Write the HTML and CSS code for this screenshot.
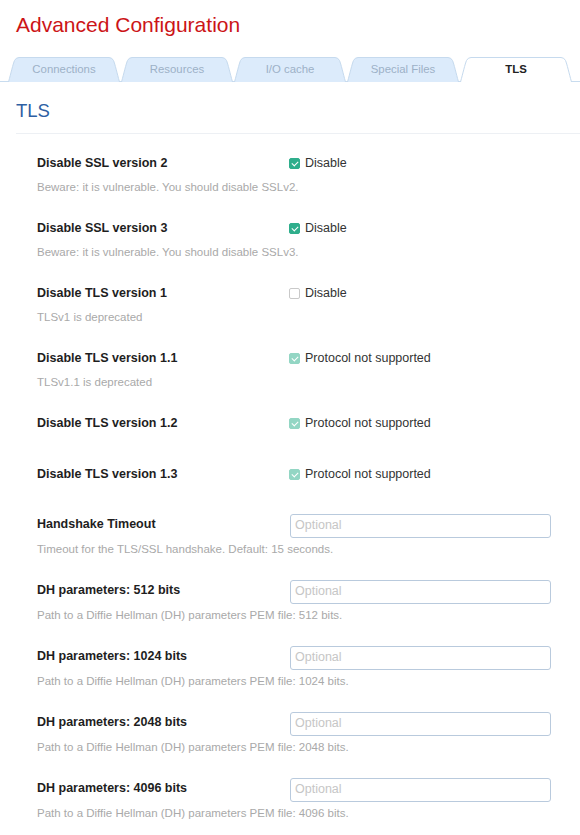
FILE: index.html
```html
<!DOCTYPE html>
<html>
<head>
<meta charset="utf-8">
<link rel="stylesheet" href="styles.css">
</head>
<body>
<h1 class="page-title">Advanced Configuration</h1>
<div class="tabbar">
  <div class="tab"><svg class="tab-shape" viewBox="0 0 112 25" width="112" height="25"><path d="M0.5,25 C3,16 5,7 6.5,3.5 Q8,0.5 11,0.5 L101,0.5 Q104,0.5 105.5,3.5 C107,7 109,16 111.5,25"/></svg><span class="tab-label">Connections</span></div>
  <div class="tab"><svg class="tab-shape" viewBox="0 0 112 25" width="112" height="25"><path d="M0.5,25 C3,16 5,7 6.5,3.5 Q8,0.5 11,0.5 L101,0.5 Q104,0.5 105.5,3.5 C107,7 109,16 111.5,25"/></svg><span class="tab-label">Resources</span></div>
  <div class="tab"><svg class="tab-shape" viewBox="0 0 112 25" width="112" height="25"><path d="M0.5,25 C3,16 5,7 6.5,3.5 Q8,0.5 11,0.5 L101,0.5 Q104,0.5 105.5,3.5 C107,7 109,16 111.5,25"/></svg><span class="tab-label">I/O cache</span></div>
  <div class="tab"><svg class="tab-shape" viewBox="0 0 112 25" width="112" height="25"><path d="M0.5,25 C3,16 5,7 6.5,3.5 Q8,0.5 11,0.5 L101,0.5 Q104,0.5 105.5,3.5 C107,7 109,16 111.5,25"/></svg><span class="tab-label">Special Files</span></div>
  <div class="tab active"><svg class="tab-shape" viewBox="0 0 112 25" width="112" height="25"><path d="M0.5,25 C3,16 5,7 6.5,3.5 Q8,0.5 11,0.5 L101,0.5 Q104,0.5 105.5,3.5 C107,7 109,16 111.5,25"/></svg><span class="tab-label">TLS</span></div>
</div>

<h2 class="section-title">TLS</h2>

<div class="rows">
  <div class="row">
    <div class="label">Disable SSL version 2</div>
    <div class="control"><span class="cb checked"></span><span class="cb-text">Disable</span></div>
    <div class="desc">Beware: it is vulnerable. You should disable SSLv2.</div>
  </div>
  <div class="row">
    <div class="label">Disable SSL version 3</div>
    <div class="control"><span class="cb checked"></span><span class="cb-text">Disable</span></div>
    <div class="desc">Beware: it is vulnerable. You should disable SSLv3.</div>
  </div>
  <div class="row">
    <div class="label">Disable TLS version 1</div>
    <div class="control"><span class="cb"></span><span class="cb-text">Disable</span></div>
    <div class="desc">TLSv1 is deprecated</div>
  </div>
  <div class="row">
    <div class="label">Disable TLS version 1.1</div>
    <div class="control"><span class="cb checked disabled"></span><span class="cb-text">Protocol not supported</span></div>
    <div class="desc">TLSv1.1 is deprecated</div>
  </div>
  <div class="row">
    <div class="label">Disable TLS version 1.2</div>
    <div class="control"><span class="cb checked disabled"></span><span class="cb-text">Protocol not supported</span></div>
  </div>
  <div class="row">
    <div class="label">Disable TLS version 1.3</div>
    <div class="control"><span class="cb checked disabled"></span><span class="cb-text">Protocol not supported</span></div>
  </div>
  <div class="row input-row">
    <div class="label">Handshake Timeout</div>
    <div class="control"><input class="text-input" type="text" placeholder="Optional"></div>
    <div class="desc">Timeout for the TLS/SSL handshake. Default: 15 seconds.</div>
  </div>
  <div class="row input-row">
    <div class="label">DH parameters: 512 bits</div>
    <div class="control"><input class="text-input" type="text" placeholder="Optional"></div>
    <div class="desc">Path to a Diffie Hellman (DH) parameters PEM file: 512 bits.</div>
  </div>
  <div class="row input-row">
    <div class="label">DH parameters: 1024 bits</div>
    <div class="control"><input class="text-input" type="text" placeholder="Optional"></div>
    <div class="desc">Path to a Diffie Hellman (DH) parameters PEM file: 1024 bits.</div>
  </div>
  <div class="row input-row">
    <div class="label">DH parameters: 2048 bits</div>
    <div class="control"><input class="text-input" type="text" placeholder="Optional"></div>
    <div class="desc">Path to a Diffie Hellman (DH) parameters PEM file: 2048 bits.</div>
  </div>
  <div class="row input-row">
    <div class="label">DH parameters: 4096 bits</div>
    <div class="control"><input class="text-input" type="text" placeholder="Optional"></div>
    <div class="desc">Path to a Diffie Hellman (DH) parameters PEM file: 4096 bits.</div>
  </div>
</div>
</body>
</html>
```

FILE: styles.css
```css
* { box-sizing: border-box; }

html, body {
  margin: 0;
  padding: 0;
  background: #ffffff;
  font-family: "Liberation Sans", Arial, sans-serif;
  color: #222;
}

.page-title {
  margin: 0;
  padding: 12px 0 0 16px;
  height: 57px;
  font-size: 21px;
  line-height: 26px;
  font-weight: normal;
  color: #cc1417;
}

.tabbar {
  display: flex;
  align-items: flex-end;
  gap: 1px;
  padding-left: 8px;
  height: 25px;
  border-bottom: 1px solid #c8dcef;
}

.tab {
  position: relative;
  flex: none;
  width: 112px;
  height: 24px;
  display: flex;
  align-items: center;
  justify-content: center;
}

.tab.active {
  height: 25px;
  margin-bottom: -1px;
  padding-bottom: 1px;
}

.tab-shape {
  position: absolute;
  left: 0;
  top: 0;
  overflow: visible;
}

.tab-shape path {
  fill: #dcebfb;
  stroke: #c6daee;
  stroke-width: 1;
}

.tab.active .tab-shape path {
  fill: #ffffff;
}

.tab-label {
  position: relative;
  font-size: 11.4px;
  color: #9db1c7;
}

.tab.active .tab-label {
  font-weight: bold;
  color: #222;
}

.section-title {
  margin: 17px 0 0 16px;
  padding: 0 0 10px 0;
  font-size: 18.5px;
  line-height: 24px;
  font-weight: normal;
  color: #2e5fa3;
  border-bottom: 1px solid #edf0f4;
}

.rows {
  padding: 8px 0 0 37px;
}

.row {
  display: grid;
  grid-template-columns: 252px 262px;
  min-height: 51px;
  padding: 12px 0 12px 0;
}

.row.input-row {
  padding: 10px 0 13px 0;
}

.label {
  font-size: 12.5px;
  line-height: 18px;
  font-weight: bold;
  color: #1e1e1e;
}

.input-row .label {
  margin-top: 1px;
}

.control {
  display: flex;
  align-items: center;
  height: 18px;
}

.input-row .control {
  height: 25px;
  align-items: flex-start;
  padding-left: 1px;
}

.cb {
  width: 11px;
  height: 11px;
  border: 1px solid #c9c9c9;
  border-radius: 2px;
  background: #fff;
  margin-right: 5px;
  position: relative;
  flex: none;
}

.cb.checked {
  background: #2fae8c;
  border-color: #2fae8c;
}

.cb.checked::after {
  content: "";
  position: absolute;
  left: 2.5px;
  top: 1px;
  width: 3px;
  height: 5px;
  border: solid #fff;
  border-width: 0 1.6px 1.6px 0;
  transform: rotate(45deg);
}

.cb.checked.disabled {
  background: #93d6c4;
  border-color: #93d6c4;
}

.cb-text {
  font-size: 12.5px;
  line-height: 18px;
  color: #333;
}

.desc {
  grid-column: 1 / 3;
  margin-top: 7px;
  font-size: 11.5px;
  line-height: 16px;
  color: #a9a9a9;
}

.input-row .desc {
  margin-top: 2px;
}

.text-input {
  width: 261px;
  height: 24px;
  margin: 0;
  padding: 0 4px 2px 4px;
  border: 1px solid #b9cadd;
  border-radius: 3px;
  font-family: "Liberation Sans", Arial, sans-serif;
  font-size: 12.5px;
  color: #333;
  background: #fff;
  outline: none;
}

.text-input::placeholder {
  color: #c6c6c6;
}
```
